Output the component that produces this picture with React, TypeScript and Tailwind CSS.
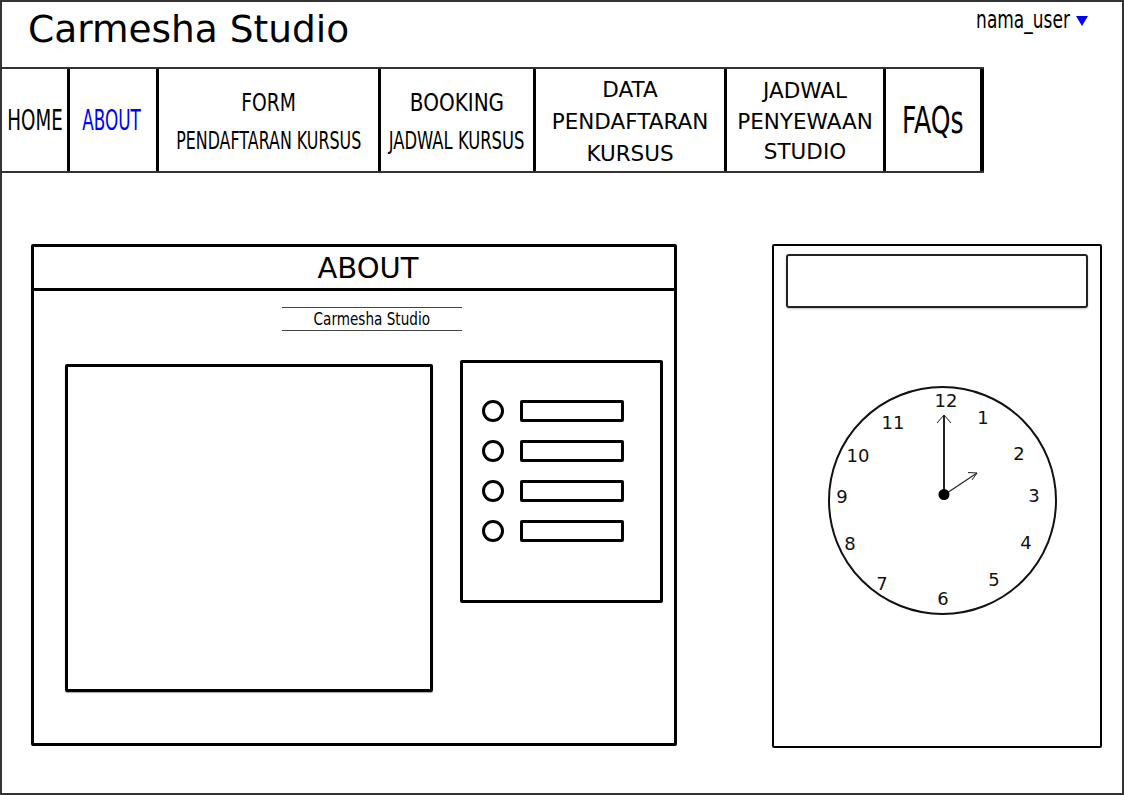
import React from "react";

const dejavu = "font-['DejaVu_Sans','Verdana',sans-serif]";

const NavCell: React.FC<{ w: string; last?: boolean; pad?: string; children: React.ReactNode }> = ({
  w,
  last,
  pad,
  children,
}) => (
  <div
    className={`${w} ${pad ?? ""} h-full flex flex-col items-center justify-center overflow-visible border-black ${
      last ? "border-r-4" : "border-r-[3px]"
    }`}
  >
    {children}
  </div>
);

const ListRow = () => (
  <div className="flex items-center h-[22px]">
    <div className="w-[22px] h-[22px] rounded-full border-[3px] border-black" />
    <div className="ml-[16px] w-[104px] h-[22px] rounded-[2px] border-[3px] border-black" />
  </div>
);

const nums: [string, number, number][] = [
  ["12", 946, 400],
  ["1", 983, 417],
  ["2", 1019, 453],
  ["3", 1034, 495],
  ["4", 1026, 542],
  ["5", 994, 579],
  ["6", 943, 598],
  ["7", 882, 583],
  ["8", 850, 543],
  ["9", 842, 496],
  ["10", 858, 455],
  ["11", 893, 422],
];

const Clock = () => (
  <svg width="240" height="240" viewBox="823 380 240 240" className="ml-[49px] mt-[72px] shrink-0">
    <circle cx="942.5" cy="500.5" r="113.5" fill="white" stroke="#111" strokeWidth="2" />
    {nums.map(([t, x, y]) => (
      <text
        key={t}
        x={x}
        y={y}
        textAnchor="middle"
        dominantBaseline="central"
        fontSize="18"
        fontFamily="DejaVu Sans, Verdana, sans-serif"
        fill="#111"
      >
        {t}
      </text>
    ))}
    <line x1="944" y1="495" x2="944" y2="415" stroke="#222" strokeWidth="2" />
    <polyline points="937,423 944,415 951,423" fill="none" stroke="#222" strokeWidth="1" />
    <line x1="944" y1="495" x2="977" y2="473" stroke="#222" strokeWidth="1.2" />
    <polyline points="968,472.5 977,473 972,480" fill="none" stroke="#222" strokeWidth="1" />
    <circle cx="944" cy="494.5" r="5.5" fill="black" />
  </svg>
);

export default function App() {
  return (
    <div className={`w-[1124px] h-[795px] border-2 border-[#333] bg-white text-black flex flex-col ${dejavu}`}>
      {/* header */}
      <div className="h-[65px] flex items-start justify-between shrink-0">
        <div className="ml-[26px] mt-[5px] text-[37.5px] leading-[44px] whitespace-nowrap">Carmesha Studio</div>
        <div className="mr-[34px] mt-[3px] flex items-center">
          <span className="inline-block text-[25px] leading-[30px] scale-x-[0.68] origin-right whitespace-nowrap">
            nama_user
          </span>
          <svg width="12" height="10" viewBox="0 0 12 10" className="ml-[6px] mt-[1px]">
            <polygon points="0,0 12,0 6,10" fill="#0000ff" />
          </svg>
        </div>
      </div>

      {/* nav */}
      <div className="w-[982px] h-[106px] flex border-y-2 border-[#333] shrink-0">
        <NavCell w="w-[68px]">
          <span className="inline-block text-[29px] leading-[34px] scale-x-[0.63] whitespace-nowrap">HOME</span>
        </NavCell>
        <NavCell w="w-[89px]" pad="pr-[4px]">
          <span className="inline-block text-[29px] leading-[34px] scale-x-[0.58] whitespace-nowrap text-[#0000ff]">
            ABOUT
          </span>
        </NavCell>
        <NavCell w="w-[222px]" pad="pt-[4px]">
          <span className="inline-block text-[25px] leading-[38px] scale-x-[0.75] whitespace-nowrap">FORM</span>
          <span className="inline-block text-[25px] leading-[38px] scale-x-[0.635] whitespace-nowrap">
            PENDAFTARAN KURSUS
          </span>
        </NavCell>
        <NavCell w="w-[155px]" pad="pt-[4px]">
          <span className="inline-block text-[25px] leading-[38px] scale-x-[0.8] whitespace-nowrap">BOOKING</span>
          <span className="inline-block text-[25px] leading-[38px] scale-x-[0.655] whitespace-nowrap">
            JADWAL KURSUS
          </span>
        </NavCell>
        <NavCell w="w-[191px]" pad="pt-[4px]">
          <div className="text-[21.5px] leading-[32px] text-center whitespace-nowrap">
            DATA
            <br />
            PENDAFTARAN
            <br />
            KURSUS
          </div>
        </NavCell>
        <NavCell w="w-[159px]" pad="pt-[4px]">
          <div className="text-[21.5px] leading-[30.5px] text-center whitespace-nowrap">
            JADWAL
            <br />
            PENYEWAAN
            <br />
            STUDIO
          </div>
        </NavCell>
        <NavCell w="w-[98px]" last>
          <span className="inline-block text-[38px] leading-[44px] scale-x-[0.66] whitespace-nowrap">FAQs</span>
        </NavCell>
      </div>

      {/* content */}
      <div className="flex items-start pl-[29px] mt-[71px]">
        {/* about panel */}
        <div className="w-[646px] h-[502px] border-[3px] border-black rounded-[2px] flex flex-col">
          <div className="h-[44px] border-b-[3px] border-black flex items-center justify-center pl-[28px]">
            <span className="text-[29px] leading-[34px]">ABOUT</span>
          </div>
          <div className="ml-[248px] mt-[16px] w-[180px] h-[24px] border-y border-[#444] flex items-center justify-center">
            <span className="inline-block text-[17px] leading-[20px] scale-x-[0.8] whitespace-nowrap">
              Carmesha Studio
            </span>
          </div>
          <div className="flex items-start mt-[29px] ml-[31px]">
            <div className="w-[368px] h-[328px] mt-[4px] border-[3px] border-black rounded-[2px] shadow-[0_1px_1px_rgba(0,0,0,0.35)]" />
            <div className="ml-[27px] w-[203px] h-[243px] border-[3px] border-black rounded-[2px] flex flex-col gap-[18px] pt-[37px] pl-[19px]">
              <ListRow />
              <ListRow />
              <ListRow />
              <ListRow />
            </div>
          </div>
        </div>

        {/* right panel */}
        <div className="ml-[95px] w-[330px] h-[504px] border-2 border-black rounded-[2px] flex flex-col">
          <div className="ml-[12px] mt-[8px] w-[302px] h-[54px] border-2 border-[#222] rounded-[3px] shadow-[0_1px_2px_rgba(0,0,0,0.25)]" />
          <Clock />
        </div>
      </div>
    </div>
  );
}
